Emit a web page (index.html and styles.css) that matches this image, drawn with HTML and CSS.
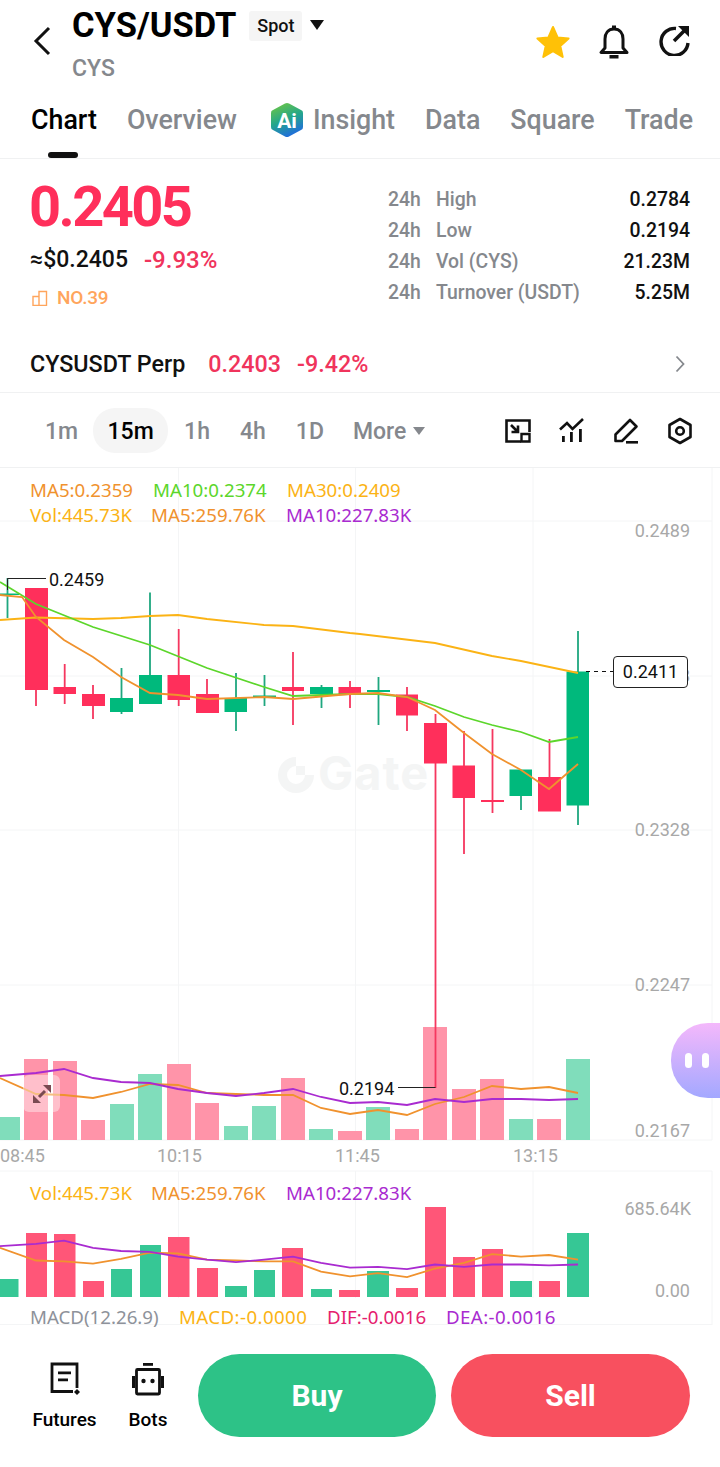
FILE: index.html
```html
<!DOCTYPE html>
<html>
<head>
    <title>CYS/USDT</title>
    <link rel="stylesheet" href="styles.css">
</head>
<body>
<div class="page">
    <header class="topbar">
        <svg class="back" width="18" height="30" viewBox="0 0 18 30"><path d="M16 2 3 15l13 13" fill="none" stroke="#111" stroke-width="3"/></svg>
        <div class="pair">
            <div class="pair-line">
                <h1>CYS/USDT</h1>
                <span class="badge">Spot</span>
                <span class="caret"></span>
            </div>
            <div class="coin">CYS</div>
        </div>
        <div class="top-icons">
            <svg class="star" width="36" height="36" viewBox="0 0 36 36"><path d="M18 3l4.600 10.400 11 1.100-8.300 7.400 2.400 11L18 27.200 8.300 32.900l2.400-11-8.300-7.400 11-1.100z" fill="#ffc107" stroke="#ffc107" stroke-width="2" stroke-linejoin="round"/></svg>
            <svg width="32" height="36" viewBox="0 0 32 36"><path d="M16 5c-6 0-9 4.500-9 10v9l-4 4.500h26L25 24v-9c0-5.500-3-10-9-10z" fill="none" stroke="#111" stroke-width="3" stroke-linejoin="round"/><path d="M14 1.500h4v3h-4zM11.500 31h9v3.500h-9z" fill="#111"/></svg>
            <svg width="32" height="32" viewBox="0 0 32 32"><path d="M17 4.500A13.500 13.500 0 1 0 29 19" fill="none" stroke="#111" stroke-width="3.400"/><path d="M15 17 27 5" stroke="#111" stroke-width="3.600"/><path d="M19 2h11v11z" fill="#111"/></svg>
        </div>
    </header>

    <nav class="tabs">
        <a class="tab tab-on">Chart</a>
        <a class="tab">Overview</a>
        <a class="tab tab-ai">
            <svg width="34" height="36" viewBox="0 0 34 36">
                <defs><linearGradient id="aiGrad" x1="0.2" y1="0" x2="0.6" y2="1"><stop offset="0" stop-color="#6cc644"/><stop offset="0.5" stop-color="#25a78a"/><stop offset="1" stop-color="#1f6be0"/></linearGradient></defs>
                <path d="M15 1.500a4 4 0 0 1 4 0L31 8a3 3 0 0 1 2 3v14a3 3 0 0 1-2 3l-12 6.500a4 4 0 0 1-4 0L3 28a3 3 0 0 1-2-3V11a3 3 0 0 1 2-3z" fill="url(#aiGrad)"/>
                <text x="17" y="26" class="ai-text">Ai</text>
            </svg>
            Insight
        </a>
        <a class="tab">Data</a>
        <a class="tab">Square</a>
        <a class="tab">Trade</a>
    </nav>

    <section class="summary">
        <div class="price-col">
            <div class="price">0.2405</div>
            <div class="price-sub"><span class="usd">≈$0.2405</span><span class="pct">-9.93%</span></div>
            <div class="rank">
                <svg width="16" height="16" viewBox="0 0 16 16"><path d="M1 6.500h6v9H1zM7 1.500h7.500v14H7z" fill="none" stroke="#ffa55c" stroke-width="1.400"/></svg>
                NO.39
            </div>
        </div>
        <div class="stats">
            <div class="stat"><span class="stat-h">24h</span><span class="stat-l">High</span><span class="stat-v">0.2784</span></div>
            <div class="stat"><span class="stat-h">24h</span><span class="stat-l">Low</span><span class="stat-v">0.2194</span></div>
            <div class="stat"><span class="stat-h">24h</span><span class="stat-l">Vol (CYS)</span><span class="stat-v">21.23M</span></div>
            <div class="stat"><span class="stat-h">24h</span><span class="stat-l">Turnover (USDT)</span><span class="stat-v">5.25M</span></div>
        </div>
    </section>

    <section class="perp">
        <span class="perp-name">CYSUSDT Perp</span>
        <span class="perp-num">0.2403</span>
        <span class="perp-num">-9.42%</span>
        <svg class="perp-arrow" width="10" height="18" viewBox="0 0 10 18"><path d="M1.500 1.500 8.500 9l-7 7.500" fill="none" stroke="#85888d" stroke-width="1.800"/></svg>
    </section>

    <section class="frames">
        <span class="frame f-1m">1m</span>
        <span class="frame frame-on">15m</span>
        <span class="frame f-1h">1h</span>
        <span class="frame f-4h">4h</span>
        <span class="frame f-1d">1D</span>
        <span class="frame f-more">More<i class="more-caret"></i></span>
        <div class="tools">
            <svg width="26" height="26" viewBox="0 0 26 26"><path d="M16 23.500H1.500v-21h23V14" fill="none" stroke="#111" stroke-width="2.600"/><path d="M6 7l7 7M6.500 14h6.500V7.500" fill="none" stroke="#111" stroke-width="2.600"/><path d="M16.500 16h8v7.500h-8z" fill="none" stroke="#111" stroke-width="2.400"/></svg>
            <svg width="26" height="26" viewBox="0 0 26 26"><path d="M1 11.500 8 5l5.500 6L24 1" fill="none" stroke="#111" stroke-width="2.600"/><path d="M3 18h2.800v6H3zM11 14h2.800v10H11zM20 11h2.800v13H20z" fill="#111"/></svg>
            <svg width="26" height="26" viewBox="0 0 26 26"><path d="M17 2 23.500 8.500 9 23H2.500v-6.500z" fill="none" stroke="#111" stroke-width="2.600" stroke-linejoin="round"/><path d="M13 23h12v2.600H13z" fill="#111"/></svg>
            <svg width="26" height="28" viewBox="0 0 26 28"><path d="M13 2l10.500 6v12L13 26 2.500 20V8z" fill="none" stroke="#111" stroke-width="2.600" stroke-linejoin="round"/><circle cx="13" cy="14" r="3.800" fill="none" stroke="#111" stroke-width="2.600"/></svg>
        </div>
    </section>

    <!-- chart is a free canvas, viewBox uses page coordinates -->
    <div class="chart">
        <svg class="chart-svg" width="720" height="857" viewBox="0 468 720 857">
            <path class="grid" d="M0 521H712M0 676H712M0 830H712M0 985H712M0 1140H712M0 1171H712M0 1324.500H712M178.500 468V1140M355.500 468V1140M533 468V1140M712 468V1140M178.500 1171V1298M355.500 1171V1298M533 1171V1298M712 1171V1325"/>

            <!-- watermark -->
            <g class="mark">
                <path d="M296 757a18 18 0 1 0 18 18h-9a9 9 0 1 1-9-9z"/>
                <rect x="296" y="766" width="9" height="9"/>
                <text x="318" y="790">Gate</text>
            </g>

            <!-- volume inside main panel -->
            <path class="vol-r" d="M24 1059h24v81H24zM53 1061h24v79H53zM81 1120h24v20H81zM167 1064h24v76h-24zM195 1103h24v37h-24zM281 1078h24v62h-24zM338 1131h24v9h-24zM395 1129h24v11h-24zM423 1027h24v113h-24zM452 1089h24v51h-24zM480 1079h24v61h-24zM537 1119h24v21h-24z"/>
            <path class="vol-g" d="M0 1117h20v23H0zM110 1104h24v36h-24zM138 1074h24v66h-24zM224 1126h24v14h-24zM252 1106h24v34h-24zM309 1129h24v11h-24zM366 1107h24v33h-24zM509 1119h24v21h-24zM566 1059h24v81h-24z"/>
            <polyline class="ln-orange" points="0,1078 36,1094 64,1095 93,1098 121,1092 150,1084 178,1085 207,1093 236,1094 264,1095 293,1095 321,1108 350,1114 378,1110 407,1115 435,1104 464,1097 492,1086 521,1089 549,1087 578,1093"/>
            <polyline class="ln-purple" points="0,1076 36,1073 64,1069 93,1078 121,1082 150,1083 178,1089 207,1093 236,1096 264,1093 293,1089 321,1097 350,1103 378,1102 407,1105 435,1099 464,1102 492,1099 521,1099 549,1100 578,1099"/>

            <!-- candles -->
            <path class="wick-r" d="M36 588V706M64.700 664V704M93 685V719M178.700 629V706M207 679V713M293 652V725M350 681V708M407 687V731M435.500 714V1088M464 731V854M492.500 729V813M549.500 739V811"/>
            <path class="wick-g" d="M7.500 578V618M121.500 668V714M150 592.500V704M236 673V731M264.500 675V706M321.500 685V708M378.500 677V725M521 796V810M578 631V825"/>
            <path class="body-r" d="M25 588h23v102H25zM53.500 687h22.500v7H53.500zM82 694h23v12H82zM167.500 675h22.500v25h-22.500zM196 694h23v19h-23zM282 687h22v4h-22zM338.500 687h22.500v8h-22.500zM396 694.500h22v21h-22zM424 723h23v40.500h-23zM452.500 765.500h22.500v32.500h-22.500zM481 800h23v2h-23zM538 777h23v34.500h-23z"/>
            <path class="body-g" d="M0 593.500h19v1.500H0zM110 698h23v14h-23zM139 675h23v29h-23zM224.500 698h22.500v14h-22.500zM253 695.500h23v1.500h-23zM310 687h23v7h-23zM367 690h23v2h-23zM509.500 769.500h22.500v26.500h-22.500zM566.500 671.500h22.500v134h-22.500z"/>

            <!-- price averages -->
            <polyline class="ln-yellow" points="0,620 36,617.500 93,619 121,618 150,616 178,615 207,619 264,625 293,626 350,633 360,634 435,643 492,656 521,661 578,673"/>
            <polyline class="ln-green" points="0,582 36,604 93,627 150,645 207,668 264,687 293,696 350,694 378,694 407,697 435,706 464,717 492,725 521,732 549,742 578,737"/>
            <polyline class="ln-orange" points="0,595 22,597 36,617 64,640 93,657 121,677 150,693 178,695 207,699 264,697 293,699 350,694 378,693 407,697 435,710 464,733 492,754 521,770 549,789 578,764"/>

            <!-- highs, lows, last -->
            <path class="pointer" d="M7.500 590V578.500H46M398 1087.500H435.500"/>
            <text class="t-mark" x="49" y="585.500">0.2459</text>
            <text class="t-mark" x="339" y="1094.500">0.2194</text>
            <path class="dash" d="M586 671.500H613"/>

            <!-- axis -->
            <text class="t-axis" x="690" y="536.500">0.2489</text>
            <text class="t-axis" x="690" y="682">0.2408</text>
            <text class="t-axis" x="690" y="836">0.2328</text>
            <text class="t-axis" x="690" y="991">0.2247</text>
            <text class="t-axis" x="690" y="1136.500">0.2167</text>
            <text class="t-axis" x="691" y="1214.500">685.64K</text>
            <text class="t-axis" x="690" y="1296.500">0.00</text>
            <text class="t-time" x="0" y="1161.500">08:45</text>
            <text class="t-time" x="157" y="1161.500">10:15</text>
            <text class="t-time" x="335" y="1161.500">11:45</text>
            <text class="t-time" x="513" y="1161.500">13:15</text>

            <!-- legend -->
            <text class="t-leg c-orange" x="30" y="496.500">MA5:0.2359</text>
            <text class="t-leg c-green" x="153" y="496.500">MA10:0.2374</text>
            <text class="t-leg c-yellow" x="287" y="496.500">MA30:0.2409</text>
            <text class="t-leg c-yellow" x="30" y="522">Vol:445.73K</text>
            <text class="t-leg c-orange" x="151" y="522">MA5:259.76K</text>
            <text class="t-leg c-purple" x="286" y="522">MA10:227.83K</text>

            <!-- volume panel -->
            <text class="t-leg c-yellow" x="30" y="1199.500">Vol:445.73K</text>
            <text class="t-leg c-orange" x="151" y="1199.500">MA5:259.76K</text>
            <text class="t-leg c-purple" x="286" y="1199.500">MA10:227.83K</text>
            <path class="sub-r" d="M26 1233h21v64H26zM54 1234h21.500v63H54zM83 1281h21v16H83zM168 1237h21.500v60H168zM197 1268h21v29h-21zM282 1248h21v49h-21zM339 1290h21v7h-21zM396 1288h22v9h-22zM425 1207h21v90h-21zM453 1257h22v40h-22zM482 1249h21v48h-21zM539 1281h21v16h-21z"/>
            <path class="sub-g" d="M0 1279h18.500v18H0zM111 1269h21v28h-21zM140 1245h21v52h-21zM225 1286h22v11h-22zM254 1270h21v27h-21zM311 1289h21v8h-21zM367 1271h22v26h-22zM510 1281h22v16h-22zM567 1233h22v64h-22z"/>
            <polyline class="ln-orange" points="0,1247.800 36,1260.500 64,1261.300 93,1263.700 121,1258.900 150,1252.600 178,1253.400 207,1259.700 236,1260.500 264,1261.300 293,1261.300 321,1271.600 350,1276.400 378,1273.200 407,1277.200 435,1268.500 464,1262.900 492,1254.200 521,1256.600 549,1255 578,1259.700"/>
            <polyline class="ln-purple" points="0,1246.200 36,1243.900 64,1240.700 93,1247.800 121,1251 150,1251.800 178,1256.600 207,1259.700 236,1262.100 264,1259.700 293,1256.600 321,1262.900 350,1267.700 378,1266.900 407,1269.200 435,1264.500 464,1266.900 492,1264.500 521,1264.500 549,1265.300 578,1264.500"/>

            <!-- macd legend -->
            <text class="t-leg c-grey" x="30" y="1323.500">MACD(12.26.9)</text>
            <text class="t-leg t-wide c-yellow" x="179" y="1323.500">MACD:-0.0000</text>
            <text class="t-leg c-pink" x="327" y="1323.500">DIF:-0.0016</text>
            <text class="t-leg t-wide c-purple" x="446" y="1323.500">DEA:-0.0016</text>
        </svg>

        <div class="last-tag">0.2411</div>
        <div class="expand">
            <svg width="22" height="22" viewBox="0 0 22 22"><path d="M8 14 14 8" stroke="#7a4a52" stroke-width="3"/><path d="M12 2h8v8zM2 20v-8l8 8z" fill="#7a4a52"/></svg>
        </div>
        <div class="buddy"><i></i><i></i></div>
    </div>

    <footer class="footer">
        <div class="foot-item foot-futures">
            <svg width="30" height="34" viewBox="0 0 30 34"><path d="M23 29.500H2V2h25v24" fill="none" stroke="#111" stroke-width="2.800"/><path d="M8 9.500h13v2.800H8zM8 16.500h10v2.800H8z" fill="#111"/><path d="M27 27l3 3-3 3-3-3z" fill="#111"/></svg>
            <span>Futures</span>
        </div>
        <div class="foot-item foot-bots">
            <svg width="32" height="34" viewBox="0 0 32 34"><path d="M11 1h10v2.800H11z" fill="#111"/><rect x="4.500" y="7.500" width="23" height="24.500" fill="none" stroke="#111" stroke-width="2.800" rx="1"/><path d="M0 14h3v12H0zM29 14h3v12h-3z" fill="#111"/><circle cx="11.500" cy="19" r="2.200" fill="#111"/><circle cx="20.500" cy="19" r="2.200" fill="#111"/></svg>
            <span>Bots</span>
        </div>
        <button class="trade buy">Buy</button>
        <button class="trade sell">Sell</button>
    </footer>
</div>
</body>
</html>
```

FILE: styles.css
```css
* {
    box-sizing: border-box;
}

body {
    margin: 0;
    background-color: #fff;
    font-family: Roboto, "Liberation Sans", sans-serif;
    color: #111;
}

.page {
    width: 720px;
    height: 1467px;
    overflow: hidden;
}

/* header */
.topbar {
    height: 92px;
    display: flex;
    padding-left: 33px;
    padding-right: 29px;
}

.back {
    margin-top: 26px;
    margin-right: 21px;
}

.pair-line {
    display: flex;
    align-items: center;
    height: 50px;
}

h1 {
    margin: 0;
    font-size: 34.5px;
    font-weight: 700;
    color: #000;
}

.badge {
    margin-left: 13px;
    margin-top: 1px;
    width: 53px;
    height: 30px;
    line-height: 30px;
    text-align: center;
    background-color: #f5f5f5;
    border-radius: 3px;
    font-size: 18px;
    font-weight: 500;
}

.caret {
    margin-left: 8px;
    width: 0;
    height: 0;
    border-left: 7.5px solid transparent;
    border-right: 7.5px solid transparent;
    border-top: 10px solid #111;
}

.coin {
    margin-top: 5px;
    font-size: 23px;
    font-weight: 500;
    color: #85888d;
}

.top-icons {
    margin-left: auto;
    margin-top: 24px;
    display: flex;
    gap: 29px;
    align-items: flex-start;
}

.star {
    margin-right: -2px;
}

/* tabs */
.tabs {
    position: relative;
    height: 67px;
    display: flex;
    padding-left: 31px;
    padding-top: 10px;
    gap: 30px;
    border-bottom: 1px solid #f0f1f2;
}

.tab {
    font-size: 26.8px;
    font-weight: 500;
    color: #85888d;
    height: 36px;
    line-height: 36px;
    white-space: nowrap;
}

.tab-on {
    color: #000;
    position: relative;
}

.tab-on::after {
    content: "";
    position: absolute;
    left: 17px;
    top: 50px;
    width: 30px;
    height: 6px;
    border-radius: 3px;
    background-color: #111;
}

.tab-ai {
    display: flex;
    align-items: center;
    gap: 9px;
    margin-left: 3px;
}

.ai-text {
    fill: #fff;
    font-size: 21px;
    font-weight: 700;
    text-anchor: middle;
}

/* price block */
.summary {
    height: 181px;
    display: flex;
    justify-content: space-between;
    padding: 25px 30px 0;
}

.price {
    font-size: 56px;
    line-height: 46px;
    font-weight: 700;
    letter-spacing: -2.600px;
    color: #ff2f5b;
    margin-left: -1px;
}

.price-sub {
    margin-top: 15px;
    display: flex;
    gap: 16px;
    font-size: 23px;
    font-weight: 500;
    line-height: 30px;
}

.pct {
    color: #f0345c;
    font-size: 24px;
}

.rank {
    margin-top: 11px;
    margin-left: 2px;
    display: flex;
    align-items: center;
    gap: 9px;
    font-size: 19px;
    font-weight: 500;
    letter-spacing: -0.2px;
    color: #ffa55c;
}

.stats {
    width: 302px;
}

.stat {
    display: flex;
    height: 31px;
    line-height: 31px;
    font-size: 19.4px;
    font-weight: 500;
    color: #85888d;
}

.stat-h {
    width: 48px;
}

.stat-v {
    margin-left: auto;
    color: #111;
}

/* perp row */
.perp {
    height: 53px;
    display: flex;
    align-items: center;
    padding: 0 35px 5px 30px;
    font-size: 23.3px;
    font-weight: 500;
    border-bottom: 1px solid #f0f1f2;
}

.perp-num {
    color: #f0345c;
    margin-left: 16px;
}

.perp-name {
    margin-right: 7px;
}

.perp-arrow {
    margin-left: auto;
}

/* timeframes */
.frames {
    position: relative;
    height: 75px;
    display: flex;
    align-items: center;
    padding-top: 1px;
    font-size: 23px;
    font-weight: 500;
    color: #85888d;
    border-bottom: 1px solid #f0f1f2;
}

.frame {
    display: block;
    padding-top: 2px;
    white-space: nowrap;
}

.f-1m {
    margin-left: 45px;
}

.frame-on {
    margin-left: 15px;
    width: 75px;
    height: 45px;
    padding-top: 0;
    line-height: 47px;
    text-align: center;
    border-radius: 22px;
    background-color: #f5f5f5;
    color: #000;
}

.f-1h {
    margin-left: 16px;
}

.f-4h {
    margin-left: 30px;
}

.f-1d {
    margin-left: 30px;
}

.f-more {
    margin-left: 29px;
    display: flex;
    align-items: center;
}

.more-caret {
    margin-left: 7px;
    margin-top: -2px;
    width: 0;
    height: 0;
    border-left: 6px solid transparent;
    border-right: 6px solid transparent;
    border-top: 8px solid #85888d;
}

.tools {
    margin-left: auto;
    margin-right: 27px;
    display: flex;
    gap: 28px;
    align-items: center;
}

/* chart */
.chart {
    position: relative;
    height: 857px;
}

.chart-svg {
    display: block;
    overflow: visible;
}

.grid {
    stroke: #f4f5f6;
    stroke-width: 1;
    fill: none;
}

.mark {
    fill: #f4f5f5;
}

.mark text {
    font-family: Inter, Roboto, sans-serif;
    font-size: 47px;
    font-weight: 700;
    letter-spacing: 1px;
}

.vol-r {
    fill: #ff94a9;
}

.vol-g {
    fill: #80ddbb;
}

.sub-r {
    fill: #ff5678;
}

.sub-g {
    fill: #36c795;
}

.wick-r {
    stroke: #f5375f;
    stroke-width: 1.8;
    fill: none;
}

.wick-g {
    stroke: #1fa77f;
    stroke-width: 1.8;
    fill: none;
}

.body-r {
    fill: #ff2f5b;
}

.body-g {
    fill: #00b97c;
}

polyline {
    fill: none;
    stroke-width: 1.8;
}

.ln-yellow {
    stroke: #fbb315;
}

.ln-green {
    stroke: #5cd62b;
}

.ln-orange {
    stroke: #f0922e;
}

.ln-purple {
    stroke: #a92bd0;
}

.pointer {
    stroke: #222;
    stroke-width: 1;
    fill: none;
}

.dash {
    stroke: #111;
    stroke-width: 1;
    stroke-dasharray: 4 4;
}

.t-mark {
    font-size: 18px;
    fill: #111;
}

.t-axis {
    font-size: 18px;
    fill: #a8a8a8;
    text-anchor: end;
}

.t-time {
    font-size: 18px;
    fill: #a8a8a8;
}

.t-leg {
    font-family: "Noto Sans", Roboto, sans-serif;
    font-size: 18.7px;
}

.t-wide {
    letter-spacing: 0.4px;
}

.c-orange {
    fill: #f0922e;
}

.c-green {
    fill: #5cd62b;
}

.c-yellow {
    fill: #fbb315;
}

.c-purple {
    fill: #a92bd0;
}

.c-grey {
    fill: #8e929a;
}

.c-pink {
    fill: #e5206e;
}

.last-tag {
    position: absolute;
    left: 613px;
    top: 188px;
    width: 75px;
    height: 32px;
    line-height: 30px;
    text-align: center;
    font-size: 18px;
    background-color: #fff;
    border: 1px solid #222;
    border-radius: 4px;
}

.expand {
    position: absolute;
    left: 23px;
    top: 607px;
    width: 37px;
    height: 37px;
    display: flex;
    align-items: center;
    justify-content: center;
    border-radius: 6px;
    background-color: rgba(255, 255, 255, 0.4);
}

.buddy {
    position: absolute;
    left: 671px;
    top: 555px;
    width: 49px;
    height: 75px;
    display: flex;
    align-items: center;
    gap: 10px;
    padding-left: 14px;
    border-radius: 37px 0 0 37px;
    background: linear-gradient(180deg, #f4b8fb, #a3a8ff);
}

.buddy i {
    display: block;
    width: 7px;
    height: 15px;
    border-radius: 4px;
    background-color: #fff;
}

/* footer */
.footer {
    height: 142px;
    display: flex;
    padding-top: 29px;
}

.foot-item {
    display: flex;
    flex-direction: column;
    align-items: center;
    font-size: 19px;
    font-weight: 500;
    color: #000;
    padding-top: 8px;
}

.foot-item span {
    margin-top: 12px;
}

.foot-futures {
    margin-left: 32px;
    width: 65px;
}

.foot-bots {
    margin-left: 32px;
    width: 38px;
}

.trade {
    border: 0;
    height: 83px;
    border-radius: 42px;
    font-family: Roboto, sans-serif;
    font-size: 30px;
    font-weight: 700;
    color: #fff;
}

.buy {
    margin-left: 31px;
    width: 238px;
    background-color: #2dc287;
}

.sell {
    margin-left: 15px;
    width: 239px;
    background-color: #f8505f;
}
```
